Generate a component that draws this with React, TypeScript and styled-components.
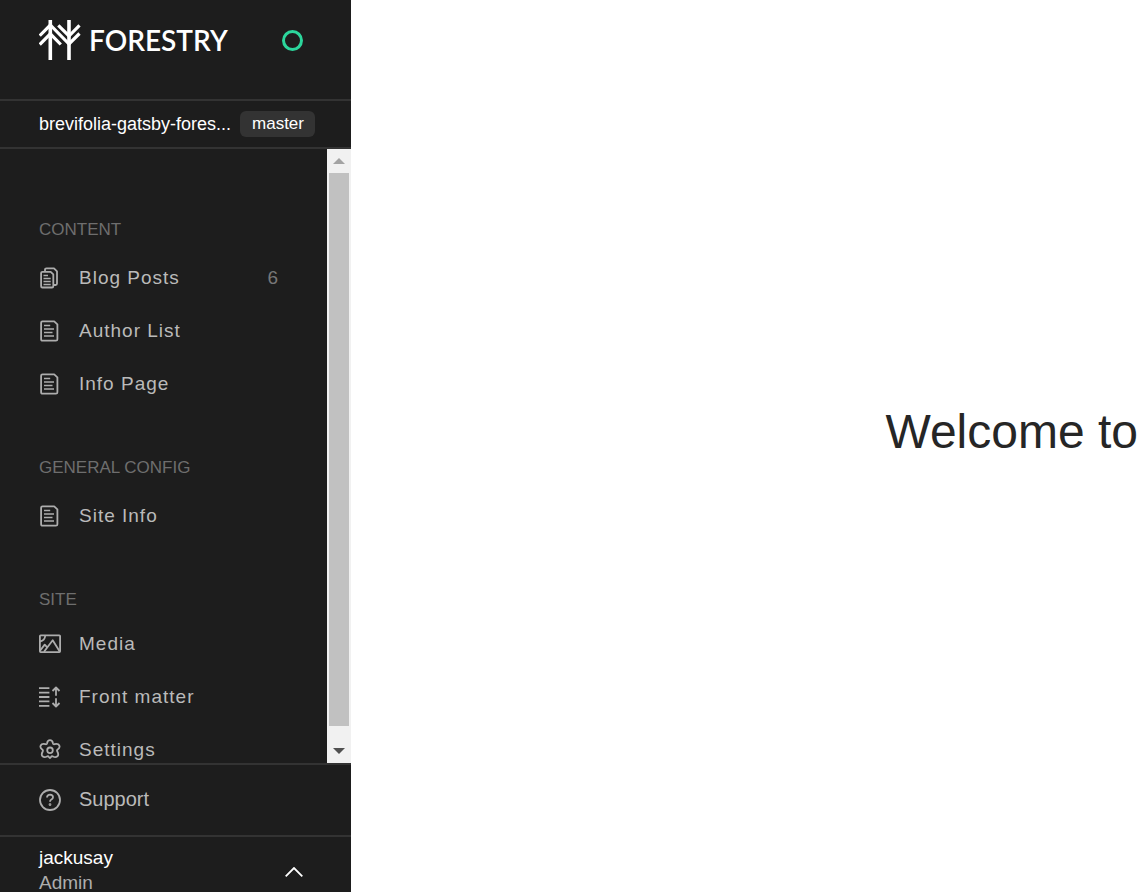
import React from "react";
import styled, { createGlobalStyle } from "styled-components";

const Global = createGlobalStyle`
  *, *::before, *::after { box-sizing: border-box; }
  body {
    margin: 0;
    background: #fff;
    font-family: "Liberation Sans", Arial, sans-serif;
  }
`;

const Page = styled.div`
  display: flex;
  height: 100vh;
  overflow: hidden;
`;

const Sidebar = styled.aside`
  display: flex;
  flex-direction: column;
  flex: 0 0 351px;
  min-width: 0;
  background: #1d1d1d;
  color: #fff;
`;

const Brand = styled.header`
  display: flex;
  align-items: flex-start;
  justify-content: space-between;
  padding: 20px 48px 39px 39px;
  border-bottom: 2px solid #333;
`;

const BrandLink = styled.a`
  display: flex;
  align-items: center;
  gap: 8px;
  color: #fff;
  text-decoration: none;
  font: 600 28px/40px Lato, sans-serif;
`;

const Status = styled.span`
  width: 21px;
  height: 21px;
  margin-top: 10px;
  border: 3px solid #2cd69c;
  border-radius: 50%;
`;

const Project = styled.div`
  display: flex;
  align-items: center;
  justify-content: space-between;
  padding: 10px 36px 10px 39px;
  border-bottom: 2px solid #333;
`;

const ProjectName = styled.span`
  white-space: nowrap;
  font-size: 18px;
  line-height: 26px;
`;

const Branch = styled.span`
  padding: 0 11px 0 12px;
  border-radius: 6px;
  background: #333;
  font-size: 17px;
  line-height: 26px;
`;

const Middle = styled.div`
  display: flex;
  flex: 1;
  min-height: 0;
  overflow: hidden;
`;

const Nav = styled.nav`
  flex: 1;
  overflow: hidden;
  padding: 71px 48px 0 39px;
`;

const Section = styled.section`
  margin-bottom: 48px;
`;

const SectionTitle = styled.h2<{ $tight?: boolean }>`
  margin: 0 0 ${(p) => (p.$tight ? 7 : 11)}px;
  color: #6e6e6e;
  font-size: 17px;
  font-weight: 400;
  line-height: 20px;
`;

const List = styled.ul`
  margin: 0;
  padding: 0;
  list-style: none;
`;

const ItemLink = styled.a<{ $spaced?: boolean }>`
  display: flex;
  align-items: center;
  height: 53px;
  color: #bababa;
  font-size: ${(p) => (p.$spaced ? 19 : 20)}px;
  letter-spacing: ${(p) => (p.$spaced ? "1px" : "normal")};
  text-decoration: none;

  svg {
    flex: none;
    margin-right: 18px;
    color: #adadad;
  }
`;

const Count = styled.span`
  margin-left: auto;
  color: #777;
`;

const Scrollbar = styled.div`
  display: flex;
  flex-direction: column;
  flex: 0 0 24px;
  background: #f1f1f1;
`;

const ScrollButton = styled.button`
  display: flex;
  align-items: center;
  justify-content: center;
  height: 24px;
  padding: 0;
  border: 0;
  background: none;
`;

const Track = styled.div`
  flex: 1;
  padding: 0 2px 13px;
`;

const Thumb = styled.div`
  height: 100%;
  background: #c1c1c1;
`;

const Support = styled.div`
  padding: 8px 48px 9px 39px;
  border-top: 2px solid #333;
  border-bottom: 2px solid #333;
`;

const User = styled.div`
  display: flex;
  align-items: center;
  justify-content: space-between;
  flex: none;
  padding: 8px 48px 0 39px;
  line-height: 25px;
  font-size: 19px;
`;

const UserName = styled.div`
  color: #fff;
`;

const Role = styled.div`
  height: 22px;
  color: #adadad;
`;

const MenuButton = styled.button`
  display: flex;
  padding: 6px 0 0;
  border: 0;
  background: none;
  color: #fff;
`;

const Main = styled.main`
  display: flex;
  flex: 1;
  min-width: 0;
  align-items: center;
  justify-content: flex-end;
  padding: 0 8px 28px;
  overflow: hidden;
`;

const Welcome = styled.h1`
  margin: 0;
  color: #262626;
  font-size: 48px;
  font-weight: 400;
  line-height: 56px;
  white-space: nowrap;
`;

const Icon = ({ children }: { children: React.ReactNode }) => (
  <svg width="22" height="22" viewBox="0 0 22 22" fill="none" stroke="currentColor"
    strokeWidth="1.8" strokeLinejoin="round" aria-hidden="true">
    {children}
  </svg>
);

const PageIcon = () => (
  <Icon>
    <path d="M3.5 1.3h11.7l3.2 3v14.9q0 1.5-1.5 1.5H3.5q-1.4 0-1.4-1.5V2.7q0-1.4 1.4-1.4z" />
    <path d="M5 5.5h6.2M5 9h10M5 12.5h8.5M5 16h10" strokeWidth="1.6" />
  </Icon>
);

const PagesIcon = () => (
  <Icon>
    <path d="M3.4 4.8h8.3l2.6 2.6v11.8q0 1.3-1.3 1.3H3.4q-1.3 0-1.3-1.3V6.1q0-1.3 1.3-1.3z" />
    <path d="M6 4.6V2.8q0-1.5 1.5-1.5H15l3 3v12.3q0 1.4-1.4 1.4h-2.2" />
    <path d="M4.5 8.5H9M4.5 11.5h7.2M4.5 14.5h7.2M4.5 17.5h7.2" strokeWidth="1.5" />
  </Icon>
);

const MediaIcon = () => (
  <Icon>
    <rect x="0.9" y="2.3" width="20.2" height="16.8" rx="0.8" />
    <path d="M1 17.8l4.7-6.2 2.1 2.2M5 18.8l8.7-11.5 7 11.2M1 8.5q4.8-.7 5.2-5.7" />
  </Icon>
);

const MatterIcon = () => (
  <Icon>
    <path d="M0 2.2h10.4M0 6.6h10.4M0 11h10.4M0 15.4h10.4M0 19.8h10.4" />
    <path d="M17 9.7V1.5M13.5 5L17 1.5 20.5 5M17 12.3v8.2M13.5 17l3.5 3.5 3.5-3.5" />
  </Icon>
);

const SettingsIcon = () => (
  <Icon>
    <path d="M8.1 4.2q.5-3 2.9-3t2.9 3q.3 1.2 1.6 1 3.7-.9 4.8 1.3 1 2.2-1.6 4-1.1.8-.4 2 1.8 3.3.1 4.8-1.9 1.6-4.4.2-1.3-.7-2.1.6Q11 20 10 18.1q-.8-1.3-2.1-.6-2.5 1.4-4.4-.2-1.6-1.5.2-4.8.6-1.2-.5-2Q.7 8.7 1.7 6.5q1.1-2.2 4.8-1.3 1.3.2 1.6-1z" />
    <circle cx="11" cy="11.3" r="2.8" />
  </Icon>
);

const SupportIcon = () => (
  <Icon>
    <circle cx="11" cy="11" r="10" />
    <path d="M8 8.5q.2-2.9 3.1-2.9 2.9.1 2.9 2.6 0 1.5-1.6 2.3-1.4.7-1.4 2.2" />
    <circle cx="11" cy="15.6" r="0.5" />
  </Icon>
);

const sections = [
  {
    title: "CONTENT",
    items: [
      { label: "Blog Posts", icon: PagesIcon, count: 6 },
      { label: "Author List", icon: PageIcon },
      { label: "Info Page", icon: PageIcon },
    ],
  },
  { title: "GENERAL CONFIG", items: [{ label: "Site Info", icon: PageIcon }] },
  {
    title: "SITE",
    tight: true,
    items: [
      { label: "Media", icon: MediaIcon },
      { label: "Front matter", icon: MatterIcon },
      { label: "Settings", icon: SettingsIcon },
    ],
  },
];

export default function App() {
  return (
    <>
      <Global />
      <Page>
        <Sidebar>
          <Brand>
            <BrandLink href="#">
              <svg width="42" height="40" viewBox="0 0 42 40" fill="none" stroke="#fff" aria-hidden="true">
                <path d="M11.3 0v40M30 0v40" strokeWidth="3.6" />
                <path d="M.7 15.7L11.3 5 30 24l10.5-10.5M.7 24.5l10.6-10.7 10.5 10.7M19.3 5.3L30 16 40.5 5.3" strokeWidth="3.2" />
              </svg>
              FORESTRY
            </BrandLink>
            <Status role="status" aria-label="Connected" />
          </Brand>
          <Project>
            <ProjectName>brevifolia-gatsby-fores...</ProjectName>
            <Branch>master</Branch>
          </Project>
          <Middle>
            <Nav>
              {sections.map((section) => (
                <Section key={section.title}>
                  <SectionTitle $tight={section.tight}>{section.title}</SectionTitle>
                  <List>
                    {section.items.map(({ label, icon: ItemIcon, ...item }) => (
                      <li key={label}>
                        <ItemLink href="#" $spaced>
                          <ItemIcon />
                          {label}
                          {"count" in item && <Count>{item.count}</Count>}
                        </ItemLink>
                      </li>
                    ))}
                  </List>
                </Section>
              ))}
            </Nav>
            <Scrollbar>
              <ScrollButton aria-label="Scroll up">
                <svg width="12" height="6" viewBox="0 0 12 6"><path d="M0 6l6-6 6 6z" fill="#a3a3a3" /></svg>
              </ScrollButton>
              <Track><Thumb /></Track>
              <ScrollButton aria-label="Scroll down">
                <svg width="12" height="6" viewBox="0 0 12 6"><path d="M0 0l6 6 6-6z" fill="#505050" /></svg>
              </ScrollButton>
            </Scrollbar>
          </Middle>
          <Support>
            <ItemLink href="#"><SupportIcon />Support</ItemLink>
          </Support>
          <User>
            <div>
              <UserName>jackusay</UserName>
              <Role>Admin</Role>
            </div>
            <MenuButton aria-label="Open account menu">
              <svg width="18" height="10" viewBox="0 0 18 10" fill="none" stroke="currentColor" strokeWidth="1.8">
                <path d="M.7 9.3L9 1l8.3 8.3" />
              </svg>
            </MenuButton>
          </User>
        </Sidebar>
        <Main>
          <Welcome>Welcome to</Welcome>
        </Main>
      </Page>
    </>
  );
}
